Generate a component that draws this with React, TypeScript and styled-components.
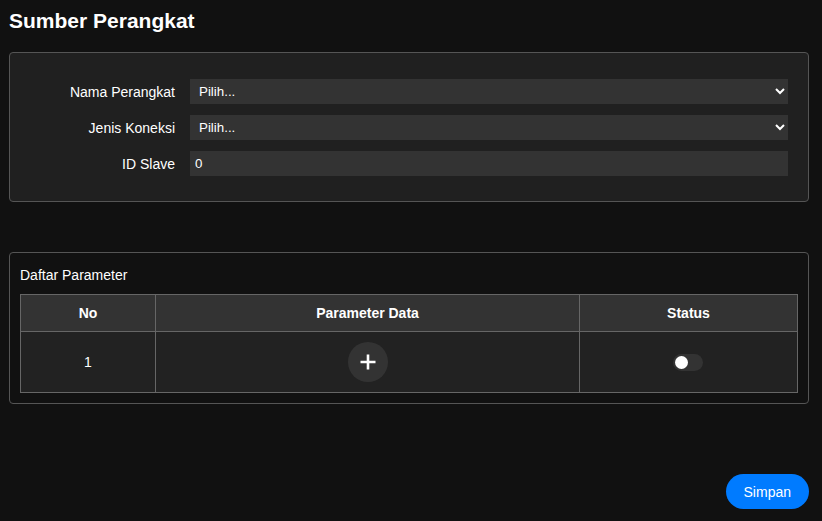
import React from "react";
import styled, { createGlobalStyle } from "styled-components";

const GlobalStyle = createGlobalStyle`
  html, body { margin: 0; padding: 0; background: #111111; }
  body { font-family: "Liberation Sans", Arial, sans-serif; color: #ffffff; }
  * { box-sizing: border-box; }
`;

const Page = styled.div`
  padding: 9px 13px 12px 9px;
  display: flex;
  flex-direction: column;
`;

const Title = styled.h2`
  margin: 0 0 19px;
  font-size: 21px;
  line-height: 24px;
  font-weight: bold;
  color: #ffffff;
`;

const FormPanel = styled.section`
  background: #202020;
  border: 1px solid #555555;
  border-radius: 4px;
  padding: 26px 20px 25px;
  display: flex;
  flex-direction: column;
  gap: 11px;
`;

const FormRow = styled.div`
  display: grid;
  grid-template-columns: 145px 1fr;
  column-gap: 15px;
  align-items: center;
`;

const Label = styled.label`
  text-align: right;
  font-size: 14px;
  line-height: 16px;
  color: #ffffff;
`;

const Select = styled.select`
  height: 25px;
  width: 100%;
  background-color: #333333;
  color: #ffffff;
  border: none;
  border-radius: 0;
  padding: 0 4px 0 5px;
  font-family: "Liberation Sans", Arial, sans-serif;
  font-size: 13.33px;
  outline: none;
  color-scheme: dark;
`;

const Input = styled.input`
  height: 25px;
  width: 100%;
  background: #333333;
  color: #ffffff;
  border: none;
  padding: 0 8px 0 5px;
  font-family: "Liberation Sans", Arial, sans-serif;
  font-size: 13.33px;
  outline: none;
`;

const ListPanel = styled.section`
  margin-top: 50px;
  border: 1px solid #555555;
  border-radius: 4px;
  padding: 10px;
  background: #111111;
`;

const ListTitle = styled.div`
  font-size: 14px;
  line-height: 16px;
  padding: 4px 0 11px;
`;

const Table = styled.table`
  width: 100%;
  border-collapse: collapse;
  table-layout: fixed;
`;

const HeadCell = styled.th`
  background: #333333;
  border: 1px solid #666666;
  height: 37px;
  padding: 0;
  font-size: 14px;
  font-weight: bold;
  text-align: center;
  color: #ffffff;
`;

const BodyCell = styled.td`
  background: #222222;
  border: 1px solid #666666;
  height: 61px;
  padding: 0;
  font-size: 14px;
  text-align: center;
  vertical-align: middle;
  color: #ffffff;
`;

const AddButton = styled.button`
  width: 40px;
  height: 40px;
  border-radius: 50%;
  border: none;
  background: #333333;
  display: inline-flex;
  align-items: center;
  justify-content: center;
  padding: 0;
  cursor: pointer;
  vertical-align: middle;
`;

const Toggle = styled.span<{ $on: boolean }>`
  position: relative;
  display: inline-block;
  width: 30px;
  height: 17px;
  margin-right: 2px;
  border-radius: 9px;
  background: ${(p) => (p.$on ? "#007bff" : "#333333")};
  vertical-align: middle;
  &::after {
    content: "";
    position: absolute;
    top: 2px;
    left: ${(p) => (p.$on ? "15px" : "2px")};
    width: 13px;
    height: 13px;
    border-radius: 50%;
    background: #ffffff;
  }
`;

const Footer = styled.div`
  margin-top: 70px;
  display: flex;
  justify-content: flex-end;
`;

const SaveButton = styled.button`
  height: 35px;
  padding: 0 18px;
  border: none;
  border-radius: 18px;
  background: #007bff;
  color: #ffffff;
  font-family: "Liberation Sans", Arial, sans-serif;
  font-size: 14px;
  cursor: pointer;
`;

export default function App() {
  return (
    <>
      <GlobalStyle />
      <Page>
        <Title>Sumber Perangkat</Title>
        <FormPanel>
          <FormRow>
            <Label>Nama Perangkat</Label>
            <Select defaultValue="">
              <option value="">Pilih...</option>
            </Select>
          </FormRow>
          <FormRow>
            <Label>Jenis Koneksi</Label>
            <Select defaultValue="">
              <option value="">Pilih...</option>
            </Select>
          </FormRow>
          <FormRow>
            <Label>ID Slave</Label>
            <Input type="text" defaultValue="0" />
          </FormRow>
        </FormPanel>

        <ListPanel>
          <ListTitle>Daftar Parameter</ListTitle>
          <Table>
            <colgroup>
              <col style={{ width: "135px" }} />
              <col style={{ width: "424px" }} />
              <col />
            </colgroup>
            <thead>
              <tr>
                <HeadCell>No</HeadCell>
                <HeadCell>Parameter Data</HeadCell>
                <HeadCell>Status</HeadCell>
              </tr>
            </thead>
            <tbody>
              <tr>
                <BodyCell>1</BodyCell>
                <BodyCell>
                  <AddButton aria-label="Tambah">
                    <svg width="16" height="16" viewBox="0 0 16 16">
                      <path d="M8 0.5V15.5M0.5 8H15.5" stroke="#ffffff" strokeWidth="2.6" />
                    </svg>
                  </AddButton>
                </BodyCell>
                <BodyCell>
                  <Toggle $on={false} />
                </BodyCell>
              </tr>
            </tbody>
          </Table>
        </ListPanel>

        <Footer>
          <SaveButton>Simpan</SaveButton>
        </Footer>
      </Page>
    </>
  );
}
